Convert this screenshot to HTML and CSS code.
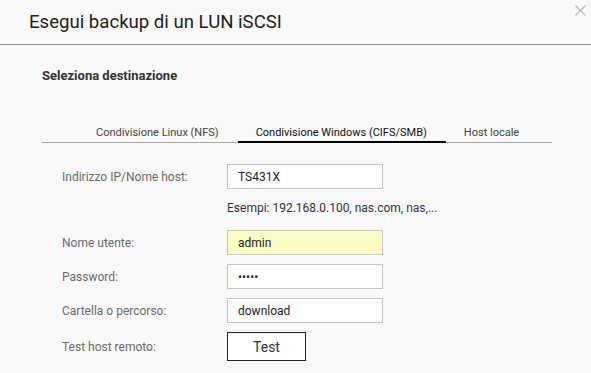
FILE: index.html
```html
<!DOCTYPE html>
<html lang="it">
<head>
    <meta charset="UTF-8">
    <title>Esegui backup di un LUN iSCSI</title>
    <link rel="stylesheet" href="styles.css">
</head>
<body>
    <div class="dialog">
        <header class="dialog-header">
            <h1>Esegui backup di un LUN iSCSI</h1>
            <span class="close">
                <svg width="11" height="11" viewBox="0 0 11 11"><path d="M0.5 0.5 L10.5 10.5 M10.5 0.5 L0.5 10.5" stroke="#b5b5b5" stroke-width="1.1" fill="none"/></svg>
            </span>
        </header>

        <div class="dialog-body">
            <h2>Seleziona destinazione</h2>

            <div class="tabs">
                <div class="tab">Condivisione Linux (NFS)</div>
                <div class="tab active">Condivisione Windows (CIFS/SMB)</div>
                <div class="tab">Host locale</div>
            </div>

            <div class="form">
                <div class="row">
                    <label>Indirizzo IP/Nome host:</label>
                    <input type="text" value="TS431X">
                </div>
                <div class="hint">Esempi: 192.168.0.100, nas.com, nas,...</div>
                <div class="row">
                    <label>Nome utente:</label>
                    <input type="text" class="autofill" value="admin">
                </div>
                <div class="row">
                    <label>Password:</label>
                    <input type="password" value="admin">
                </div>
                <div class="row">
                    <label>Cartella o percorso:</label>
                    <input type="text" value="download">
                </div>
                <div class="row test-row">
                    <label>Test host remoto:</label>
                    <button class="test-btn">Test</button>
                </div>
            </div>
        </div>
    </div>
</body>
</html>
```

FILE: styles.css
```css
*
{
    padding: 0;
    margin: 0;
    box-sizing: border-box;
}

body
{
    background: #f9f9f9;
    font-family: Roboto, "Liberation Sans", sans-serif;
    color: #222;
    overflow: hidden;
}

.dialog-header
{
    position: relative;
    height: 45px;
    border-bottom: 1px solid #8c8c8c;
    padding-left: 29px;
}

.dialog-header h1
{
    font-size: 18.6px;
    font-weight: 400;
    line-height: 44px;
    color: #1e1e1e;
}

.close
{
    position: absolute;
    top: 5px;
    right: 5px;
    line-height: 0;
}

.dialog-body
{
    padding: 23px 39px 0 42px;
}

.dialog-body h2
{
    font-size: 13px;
    font-weight: 700;
    color: #333;
    line-height: 16px;
}

.tabs
{
    display: flex;
    margin-top: 42px;
    padding-left: 36px;
    border-bottom: 1px solid #a8a8a8;
}

.tab
{
    font-size: 11px;
    color: #444;
    line-height: 14px;
    padding: 0 19px 1px 18px;
    border-bottom: 2px solid transparent;
    margin-bottom: -1px;
}

.tab.active
{
    color: #111;
    border-bottom-color: #000;
}

.form
{
    padding: 21px 0 0 20px;
}

.row
{
    display: flex;
    align-items: center;
    height: 25px;
    margin-bottom: 9px;
}

.row.test-row
{
    height: 29px;
}

.row label
{
    width: 165px;
    font-size: 12px;
    color: #6b6b6b;
}

.row input
{
    width: 156px;
    height: 25px;
    border: 1px solid #c4c4c4;
    background: #fff;
    padding-left: 10px;
    font-family: Roboto, "Liberation Sans", sans-serif;
    font-size: 12px;
    color: #222;
    outline: none;
}

.row input.autofill
{
    background: #fafcc4;
}

.hint
{
    padding: 3px 0 15px 165px;
    font-size: 12px;
    color: #333;
    line-height: 14px;
}

.test-btn
{
    width: 79px;
    height: 29px;
    border: 1px solid #222;
    background: #fff;
    font-family: Roboto, "Liberation Sans", sans-serif;
    font-size: 14px;
    color: #333;
}
```
